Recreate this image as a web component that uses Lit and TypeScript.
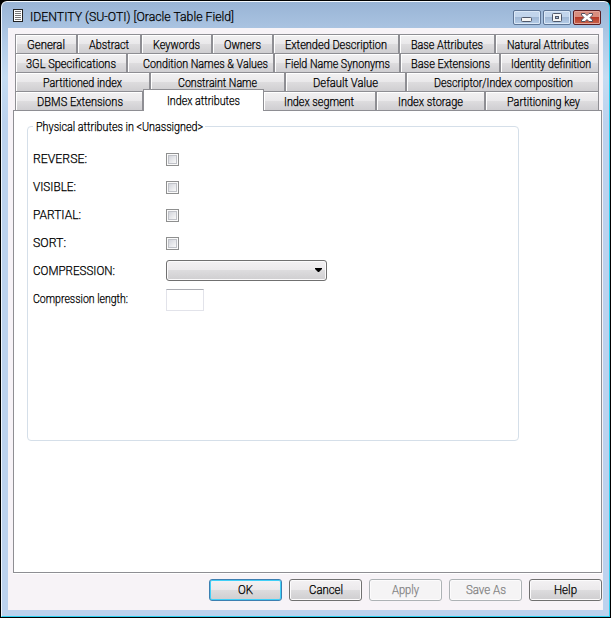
import { LitElement, html, css, svg } from "lit";
import { customElement, property } from "lit/decorators.js";

/** A single line of text set to an exact advance width. */
@customElement("fit-text")
class FitText extends LitElement {
  @property() text = "";
  @property({ type: Number }) w = 0;
  static styles = css`
    :host { display: inline-block; white-space: nowrap; height: 14px; line-height: 14px; flex: none; text-align: left; }
    .t { display: inline-block; transform-origin: 0 50%; -webkit-text-stroke: 0.25px currentColor; }
  `;
  render() {
    return html`<span class="t">${this.text}</span>`;
  }
  updated() {
    const t = this.renderRoot.querySelector(".t") as HTMLElement;
    this.style.width = this.w + "px";
    t.style.transform = "none";
    const n = t.getBoundingClientRect().width;
    if (n) t.style.transform = `scaleX(${this.w / n})`;
  }
}

type Tab = { label: string; width: number; text: number; pad: number; active?: boolean };
const tab = (label: string, width: number, pad: number, text: number, active = false): Tab => ({ label, width, pad, text, active });

const ROWS: Tab[][] = [
  [tab("General", 62, 12, 38), tab("Abstract", 64, 12, 40), tab("Keywords", 71, 12, 47), tab("Owners", 61, 12, 37), tab("Extended Description", 126, 12, 102), tab("Base Attributes", 96, 12, 72), tab("Natural Attributes", 104, 12, 82)],
  [tab("3GL Specifications", 112, 11, 90), tab("Condition Names & Values", 147, 16, 125), tab("Field Name Synonyms", 126, 11, 105), tab("Base Extensions", 100, 11, 79), tab("Identity definition", 99, 11, 80)],
  [tab("Partitioned index", 135, 28, 79), tab("Constraint Name", 135, 28, 79), tab("Default Value", 121, 28, 65), tab("Descriptor/Index composition", 193, 28, 139)],
  [tab("DBMS Extensions", 128, 22, 86), tab("Index attributes", 121, 24, 73, true), tab("Index segment", 112, 21, 70), tab("Index storage", 109, 22, 65), tab("Partitioning key", 114, 22, 73)],
];

const CHECKS: [string, number][] = [["REVERSE:", 54], ["VISIBLE:", 43], ["PARTIAL:", 48], ["SORT:", 33]];

const BUTTONS: [string, number, string][] = [["OK", 15, "default"], ["Cancel", 34, ""], ["Apply", 27, "disabled"], ["Save As", 40, "disabled"], ["Help", 23, ""]];

@customElement("app-root")
class AppRoot extends LitElement {
  static styles = css`
    :host { display: block; width: 611px; height: 618px; background: #000; font: 300 12.5px/14px Roboto, "Liberation Sans", sans-serif; color: #000; overflow: hidden; }
    * { box-sizing: border-box; }
    .window { height: 618px; padding: 1px 1px 1px 1px; }
    .frame { height: 616px; border: 1px solid #2bd0f0; border-left-color: #eef5fd; border-top-color: #f4f9fe; border-radius: 6px 6px 0 0; padding: 0 6px 6px 6px; background: linear-gradient(#99b4d5, #b2cbe8 40px, #c5dcf2 75px, #bcd2ee 120px, #bcd2ee); }
    .title { height: 26px; display: flex; align-items: flex-start; padding: 7px 0 0 5px; }
    .title svg { display: block; flex: none; }
    .title fit-text { font-size: 13px; margin: 1px 0 0 6px; }
    .controls { margin-left: auto; display: flex; gap: 2px; padding: 1px 2px 0 0; }
    .control { width: 28px; height: 15px; border: 1px solid #5e7596; border-radius: 2px; box-shadow: inset 0 0 0 1px #dbe8f7; background: linear-gradient(#c2d5ec 50%, #a0b8d6 50%, #b6cde8); }
    .control.close { border-color: #5b1d22; box-shadow: inset 0 0 0 1px #e3a59b; background: linear-gradient(#d98d7e 48%, #b83a28 50%, #c9644b); }
    .content { height: 582px; background: #f7f3f7; padding: 6px 1px 0 5px; }
    .tabs { padding-left: 2px; }
    .row { display: flex; height: 19px; }
    .tab { height: 19px; border: 1px solid #8e8e93; border-width: 1px 1px 0 1px; box-shadow: inset 1px 1px #fff; background: linear-gradient(#f2f1f2 0, #e9e8ea 50%, #dddcde 52%, #cfced1); padding-top: 3px; flex: none; }
    .tab.active { height: 22px; margin: -2px 0 0; background: #fff; box-shadow: none; position: relative; padding-top: 4px; }
    .tab.active + .tab { border-left: 0; }
    .panel { width: 589px; height: 463px; border: 1px solid #8e8e93; background: #fff; padding: 15px 0 0 13px; box-shadow: 0 1px #fff; }
    .group { width: 492px; height: 315px; border: 1px solid #d5dfe9; border-radius: 4px; padding: 0 0 0 5px; }
    .legend { width: 172px; height: 14px; margin-top: -7px; padding-left: 3px; background: #fff; }
    .field { display: flex; align-items: center; height: 28px; }
    .first { margin-top: 11px; }
    .label { width: 133px; height: 14px; flex: none; }
    .check { width: 13px; height: 13px; border: 1px solid #8e8f8f; padding: 1px; background: #fafafa; }
    .check i { display: block; width: 9px; height: 9px; border: 1px solid #c0c2c8; background: linear-gradient(135deg, #d3d5dc, #f8f8f8); }
    .select { width: 161px; height: 21px; border: 1px solid #707070; border-radius: 3px; box-shadow: inset 0 0 0 1px #fbfafb; background: linear-gradient(#f3f1f3, #ebe9eb 50%, #dddcde 50%, #cfced0); display: flex; align-items: center; justify-content: flex-end; padding: 1px 3px 0 0; margin-bottom: 2px; }
    .input { width: 38px; height: 22px; border: 1px solid #e2e3ea; border-top-color: #abadb3; background: #fff; margin-top: 2px; }
    .buttons { display: flex; justify-content: flex-end; gap: 7px; padding-top: 6px; }
    .button { width: 73px; height: 22px; border: 1px solid #707070; border-radius: 3px; box-shadow: inset 0 0 0 1px #fcfbfc; background: linear-gradient(#f3f1f3, #ebe9eb 50%, #dddcde 50%, #cfced0); text-align: center; padding-top: 3px; }
    .button.default { border-color: #3c7fb1; box-shadow: inset 0 0 0 1px #40d0f8; }
    .button.disabled { border-color: #adb2b5; color: #838383; background: #f5f4f5; }
  `;

  renderControls() {
    return html`<div class="controls">
      <div class="control"><svg width="26" height="13">${svg`<rect x="7.5" y="6.5" width="10" height="4" rx="1" fill="#f5f5f5" stroke="#50586a"/>`}</svg></div>
      <div class="control"><svg width="26" height="13">${svg`<rect x="8.5" y="2.5" width="9" height="8" rx="1" fill="#f5f5f5" stroke="#50586a"/><rect x="11.5" y="5.5" width="3" height="2" fill="#a4bad6" stroke="#50586a"/>`}</svg></div>
      <div class="control close"><svg width="26" height="13">${svg`<path d="M7.500 2.500h3.500l2 2 2-2h3.500v1.500l-2.500 2.500 2.500 2.500v1.500H15l-2-2-2 2H7.500V9l2.500-2.500L7.500 4z" fill="#fff" stroke="#54505e"/>`}</svg></div>
    </div>`;
  }

  render() {
    return html`<div class="window"><div class="frame">
      <div class="title">
        <svg width="11" height="14"><rect x=".5" y=".5" width="9" height="12" fill="#fff" stroke="#222"/><path d="M2 2.500h6M2 4.500h6M2 6.500h6M2 8.500h6M2 10.500h6" stroke="#777"/></svg>
        <fit-text .text=${"IDENTITY (SU-OTI) [Oracle Table Field]"} .w=${204}></fit-text>
        ${this.renderControls()}
      </div>
      <div class="content">
        <div class="tabs">${ROWS.map((r) => html`<div class="row">${r.map((t) => html`<div class="tab ${t.active ? "active" : ""}" style="width:${t.width}px;padding-left:${t.pad - 1}px"><fit-text .text=${t.label} .w=${t.text}></fit-text></div>`)}</div>`)}</div>
        <div class="panel"><div class="group">
          <div class="legend"><fit-text .text=${"Physical attributes in <Unassigned>"} .w=${167}></fit-text></div>
          <div class="field first"><div class="label"><fit-text .text=${CHECKS[0][0]} .w=${CHECKS[0][1]}></fit-text></div><div class="check"><i></i></div></div>
          ${CHECKS.slice(1).map(([l, w]) => html`<div class="field"><div class="label"><fit-text .text=${l} .w=${w}></fit-text></div><div class="check"><i></i></div></div>`)}
          <div class="field"><div class="label"><fit-text .text=${"COMPRESSION:"} .w=${82}></fit-text></div><div class="select"><svg width="9" height="5"><path d="M1 0h7v1L5 4H4L1 1z"/></svg></div></div>
          <div class="field"><div class="label"><fit-text .text=${"Compression length:"} .w=${95}></fit-text></div><div class="input"></div></div>
        </div></div>
        <div class="buttons">${BUTTONS.map(([l, w, c]) => html`<div class="button ${c}"><fit-text .text=${l} .w=${w}></fit-text></div>`)}</div>
      </div>
    </div></div>`;
  }
}
